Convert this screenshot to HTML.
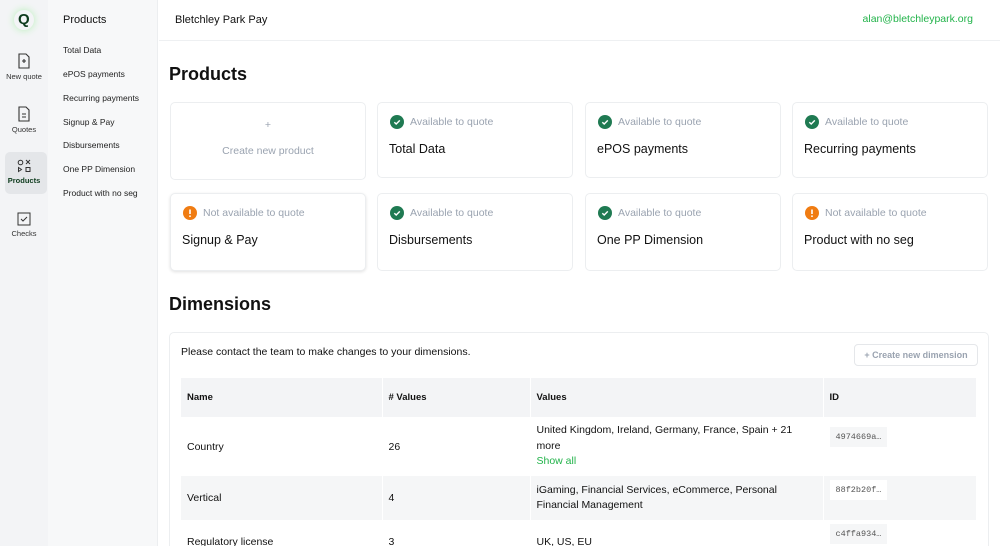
<!DOCTYPE html>
<html style="overflow:hidden;height:546px"><head><meta charset="utf-8"><style>
*{box-sizing:border-box;margin:0;padding:0}
body{width:1000px;height:546px;overflow:hidden;font-family:"Liberation Sans",sans-serif;background:#fff;position:relative;color:#111}
.rail{position:absolute;left:0;top:0;width:48px;height:546px;background:#f3f4f6}
.side{position:absolute;left:48px;top:0;width:110px;height:546px;background:#f7f8f9;border-right:1px solid #eceef0}
.side h3{font-size:11px;font-weight:normal;position:absolute;left:15px;top:14px}
.side a{position:absolute;left:15px;font-size:8.5px;color:#222}
.ri{position:absolute;left:0;width:48px;text-align:center;font-size:7.5px;color:#333}
.ri svg{display:block;margin:0 auto 3px}
.hdr{position:absolute;left:159px;top:0;right:0;height:41px;border-bottom:1px solid #eef0f2}
.card{position:absolute;width:196px;height:78px;border:1px solid #eceef0;border-radius:5px;background:#fff}
.st{position:absolute;left:12px;top:12px;font-size:10.5px;color:#9aa3b0;display:flex;align-items:center}
.st svg{margin-right:6px}
.nm{position:absolute;left:11px;top:39px;font-size:12.5px}
h2{position:absolute;left:169px;font-size:18px;font-weight:bold}
table{border-collapse:collapse;position:absolute;left:181px;top:378px;width:796px;font-size:10.5px}
td,th{padding:0 6px;text-align:left;vertical-align:middle;border-right:1px solid #fff}
th{background:#f3f4f6;height:39px;font-size:9.5px}
.id{font-family:"Liberation Mono",monospace;font-size:8.5px;color:#555;background:#f5f6f7;padding:5px 6px;display:inline-block}
</style></head><body>
<svg width="0" height="0" style="position:absolute"><defs>
<symbol id="ok" viewBox="0 0 14 14"><circle cx="7" cy="7" r="7" fill="#1f7a52"/><path d="M4.3 7.2l1.9 1.8 3.6-3.6" fill="none" stroke="#fff" stroke-width="1.4"/></symbol>
<symbol id="bad" viewBox="0 0 14 14"><circle cx="7" cy="7" r="7" fill="#f07c12"/><path d="M7 3.5v4.5" stroke="#fff" stroke-width="1.6"/><circle cx="7" cy="10.2" r="0.9" fill="#fff"/></symbol>
</defs></svg>
<div class="rail">
 <div style="position:absolute;left:14px;top:10px;width:20px;height:20px;border-radius:50%;box-shadow:0 0 8px #b7f0b7"></div>
 <div style="position:absolute;left:18px;top:11px;font-weight:bold;font-size:15px;color:#0d3a1c">Q</div>
 <div class="ri" style="top:53px"><svg width="14" height="16" viewBox="0 0 14 16"><path d="M2 1h7l3 3v11H2z M5 8h4 M7 6v4" fill="none" stroke="#333" stroke-width="1.1"/></svg>New quote</div>
 <div class="ri" style="top:106px"><svg width="14" height="16" viewBox="0 0 14 16"><path d="M2 1h7l3 3v11H2z M5 8h4 M5 11h4" fill="none" stroke="#333" stroke-width="1.1"/></svg>Quotes</div>
 <div style="position:absolute;left:5px;top:152px;width:42px;height:42px;background:#e4e6e9;border-radius:5px"></div>
 <div class="ri" style="top:159px;font-weight:bold;color:#0d3a1c"><svg width="14" height="14" viewBox="0 0 14 14"><circle cx="3.5" cy="3.5" r="2.3" fill="none" stroke="#333"/><path d="M9 1l4 4M13 1l-4 4M1.5 8.5v4l3-2z M9 8.5h4v4H9z" fill="none" stroke="#333"/></svg>Products</div>
 <div class="ri" style="top:212px"><svg width="14" height="14" viewBox="0 0 14 14"><rect x="1" y="1" width="12" height="12" fill="none" stroke="#333"/><path d="M4 7l2 2 4-4" fill="none" stroke="#333"/></svg>Checks</div>
</div>
<div class="side"><h3>Products</h3>
<a style="top:45px">Total Data</a><a style="top:69px">ePOS payments</a><a style="top:93px">Recurring payments</a><a style="top:117px">Signup &amp; Pay</a><a style="top:140px">Disbursements</a><a style="top:164px">One PP Dimension</a><a style="top:188px">Product with no seg</a></div>
<div class="hdr"><span style="position:absolute;left:16px;top:14px;font-size:11px">Bletchley Park Pay</span><span style="position:absolute;right:27px;top:13px;font-size:10.5px;color:#22b34a">alan@bletchleypark.org</span></div>
<h2 style="top:64px">Products</h2>
<div class="card" style="left:170px;top:102px;text-align:center;color:#9aa3b0;font-size:10.5px"><div style="margin-top:16px">+</div><div style="margin-top:14px">Create new product</div></div>
<div class="card" style="left:377px;top:102px;height:76px"><div class="st"><svg width="14" height="14"><use href="#ok"/></svg>Available to quote</div><div class="nm">Total Data</div></div>
<div class="card" style="left:585px;top:102px;height:76px"><div class="st"><svg width="14" height="14"><use href="#ok"/></svg>Available to quote</div><div class="nm">ePOS payments</div></div>
<div class="card" style="left:792px;top:102px;height:76px"><div class="st"><svg width="14" height="14"><use href="#ok"/></svg>Available to quote</div><div class="nm">Recurring payments</div></div>
<div class="card" style="left:170px;top:193px;box-shadow:0 1px 3px rgba(0,0,0,.12)"><div class="st"><svg width="14" height="14"><use href="#bad"/></svg>Not available to quote</div><div class="nm">Signup &amp; Pay</div></div>
<div class="card" style="left:377px;top:193px"><div class="st"><svg width="14" height="14"><use href="#ok"/></svg>Available to quote</div><div class="nm">Disbursements</div></div>
<div class="card" style="left:585px;top:193px"><div class="st"><svg width="14" height="14"><use href="#ok"/></svg>Available to quote</div><div class="nm">One PP Dimension</div></div>
<div class="card" style="left:792px;top:193px"><div class="st"><svg width="14" height="14"><use href="#bad"/></svg>Not available to quote</div><div class="nm">Product with no seg</div></div>
<h2 style="top:294px">Dimensions</h2>
<div style="position:absolute;left:169px;top:332px;width:820px;height:230px;border:1px solid #eceef0;border-radius:5px"></div>
<div style="position:absolute;left:181px;top:346px;font-size:10.5px">Please contact the team to make changes to your dimensions.</div>
<div style="position:absolute;left:854px;top:344px;width:124px;height:22px;border:1px solid #e5e7ea;border-radius:4px;font-size:9px;color:#9aa3b0;font-weight:bold;text-align:center;line-height:21px">+ Create new dimension</div>
<table>
<tr><th style="width:201px">Name</th><th style="width:148px"># Values</th><th style="width:293px">Values</th><th>ID</th></tr>
<tr style="height:59px"><td>Country</td><td>26</td><td style="line-height:15.5px">United Kingdom, Ireland, Germany, France, Spain + 21 more<br><span style="color:#22b34a">Show all</span></td><td style="vertical-align:top;padding-top:10px"><span class="id">4974669a…</span></td></tr>
<tr style="height:44px;background:#f5f6f7"><td>Vertical</td><td>4</td><td style="line-height:15.5px">iGaming, Financial Services, eCommerce, Personal Financial Management</td><td style="vertical-align:top;padding-top:4px"><span class="id" style="background:#fff">88f2b20f…</span></td></tr>
<tr style="height:44px"><td>Regulatory license</td><td>3</td><td>UK, US, EU</td><td style="vertical-align:top;padding-top:4px"><span class="id">c4ffa934…</span></td></tr>
</table>
</body></html>
